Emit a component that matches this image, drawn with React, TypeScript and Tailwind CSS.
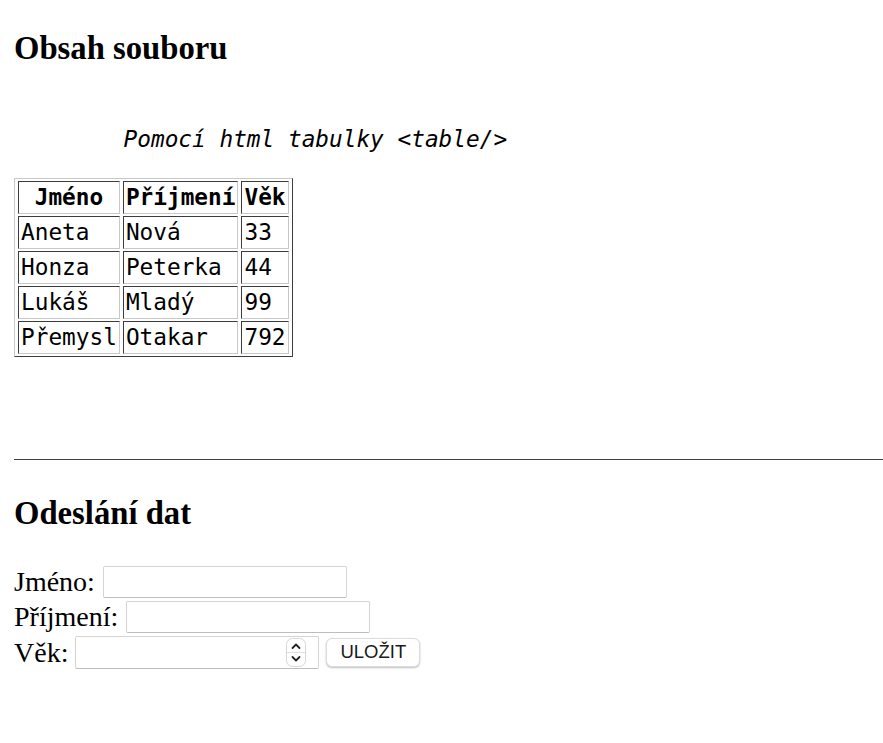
import React from 'react';

// ===========================================
// DATA
// ===========================================

const people = [
  { first: 'Aneta', last: 'Nová', age: 33 },
  { first: 'Honza', last: 'Peterka', age: 44 },
  { first: 'Lukáš', last: 'Mladý', age: 99 },
  { first: 'Přemysl', last: 'Otakar', age: 792 },
];

const serif = "font-['Liberation_Serif','Times_New_Roman',serif]";
const mono = "font-['DejaVu_Sans_Mono','Liberation_Mono',monospace]";

const cellCls =
  'border border-t-[#3c3c3c] border-l-[#3c3c3c] border-b-[#c8c8c8] border-r-[#c8c8c8] px-[2px] py-0 h-[33px] leading-[31px] whitespace-nowrap';

// ===========================================
// PARTS
// ===========================================

const Spinner: React.FC = () => (
  <svg width="20" height="29" viewBox="0 0 20 29" className="shrink-0">
    <rect x="0.5" y="0.5" width="19" height="28" rx="6" fill="#fff" stroke="#d6d6d6" />
    <line x1="1" y1="14.5" x2="19" y2="14.5" stroke="#e0e0e0" />
    <path d="M6.5 10 L10 6.5 L13.5 10" fill="none" stroke="#222" strokeWidth="1.8" strokeLinecap="round" strokeLinejoin="round" />
    <path d="M6.5 19 L10 22.5 L13.5 19" fill="none" stroke="#222" strokeWidth="1.8" strokeLinecap="round" strokeLinejoin="round" />
  </svg>
);

const TextField: React.FC = () => (
  <input
    type="text"
    className="w-[244px] h-[32px] bg-white border border-[#d4d4d4] border-b-[#bdbdbd] rounded-[2px] px-1 outline-none"
  />
);

// ===========================================
// APP
// ===========================================

export default function App() {
  return (
    <div className={`min-h-[743px] bg-white text-black pl-[14px] pt-[30px] ${serif}`}>
      {/* Obsah souboru */}
      <h2 className="text-[32.7px] font-bold leading-[36px]">Obsah souboru</h2>

      <pre className={`mt-[60px] text-[22.75px] italic leading-[27px] [tab-size:8] ${mono}`}>
        {'\tPomocí html tabulky <table/>'}
      </pre>

      <table
        className={`mt-[25px] border-separate border-spacing-x-[3px] border-spacing-y-[2px] border border-t-[#c8c8c8] border-l-[#c8c8c8] border-b-[#3c3c3c] border-r-[#3c3c3c] text-[22.75px] ${mono}`}
      >
        <thead>
          <tr>
            <th className={`${cellCls} font-bold text-center`}>Jméno</th>
            <th className={`${cellCls} font-bold text-center`}>Příjmení</th>
            <th className={`${cellCls} font-bold text-center`}>Věk</th>
          </tr>
        </thead>
        <tbody>
          {people.map((p) => (
            <tr key={p.first}>
              <td className={cellCls}>{p.first}</td>
              <td className={cellCls}>{p.last}</td>
              <td className={cellCls}>{p.age}</td>
            </tr>
          ))}
        </tbody>
      </table>

      <div className="mt-[102px] h-px bg-[#404040]" />

      {/* Odeslání dat */}
      <h2 className="mt-[35px] text-[32.7px] font-bold leading-[36px]">Odeslání dat</h2>

      <form className="mt-[33px] text-[28px] leading-[35px]" onSubmit={(e) => e.preventDefault()}>
        <div className="flex items-center gap-[8px] h-[35px]">
          <span>Jméno:</span>
          <TextField />
        </div>
        <div className="flex items-center gap-[8px] h-[35px]">
          <span>Příjmení:</span>
          <TextField />
        </div>
        <div className="flex items-center gap-[7px] h-[35px] pt-[2px]">
          <span>Věk:</span>
          <div className="w-[244px] h-[33px] bg-white border border-[#d4d4d4] border-b-[#bdbdbd] rounded-[2px] flex items-center justify-end pr-[12px]">
            <Spinner />
          </div>
          <button
            type="submit"
            className="h-[29px] px-[13px] bg-white rounded-[6px] border border-[#dcdcdc] shadow-[0_1px_2px_rgba(0,0,0,0.25)] text-[18.5px] leading-none text-[#1a1a1a] font-['Liberation_Sans',Arial,sans-serif]"
          >
            ULOŽIT
          </button>
        </div>
      </form>
    </div>
  );
}
